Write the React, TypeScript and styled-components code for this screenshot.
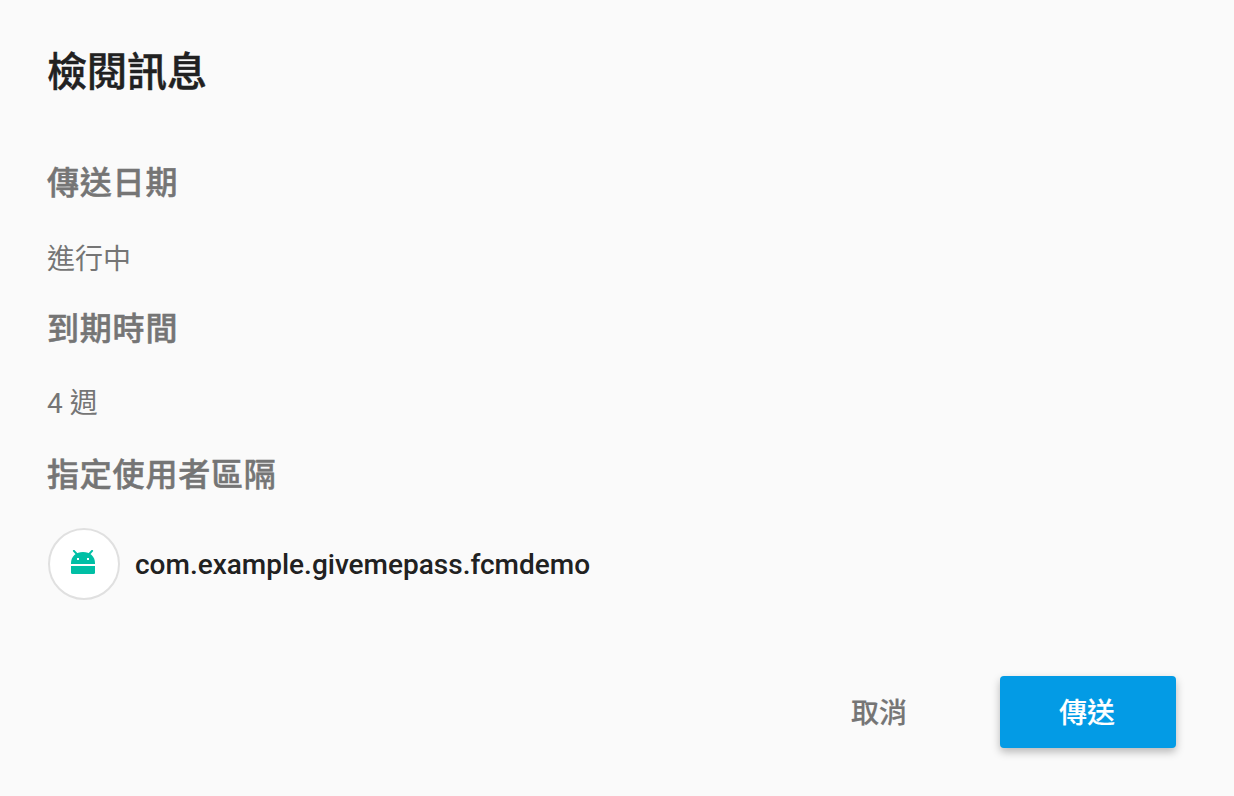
import React from 'react';
import styled, { createGlobalStyle } from 'styled-components';

const GlobalStyle = createGlobalStyle`
  body { margin: 0; background: #fafafa; }
  * { box-sizing: border-box; }
`;

const Dialog = styled.main`
  display: flex;
  flex-direction: column;
  width: 100%;
  height: 796px;
  padding: 45px 58px 48px 47px;
  background: #fafafa;
  color: #757575;
  font-family: Roboto, 'Noto Sans CJK TC', sans-serif;
`;

const Title = styled.h1`
  margin: 0;
  font-size: 40px;
  line-height: 56px;
  font-weight: 500;
  color: #212121;
  -webkit-text-stroke: 0.5px #212121;
`;

const Sections = styled.dl`
  display: flex;
  flex-direction: column;
  margin: 58px 0 0;
`;

const Label = styled.dt`
  font-size: 32px;
  line-height: 48px;
  font-weight: 500;
  letter-spacing: 0.8px;
  -webkit-text-stroke: 0.5px #757575;
`;

const Value = styled.dd<{ $lead: number }>`
  margin: ${p => p.$lead}px 0 ${p => 58 - p.$lead}px;
  font-size: 28px;
  line-height: 40px;
`;

const AppTarget = styled.dd`
  display: flex;
  align-items: center;
  gap: 15px;
  margin: 29px 0 0 1px;
`;

const Avatar = styled.span`
  display: flex;
  align-items: center;
  justify-content: center;
  width: 72px;
  height: 72px;
  padding: 0 2px 4px 0;
  border: 2px solid #e0e0e0;
  border-radius: 50%;
  background: #fff;
`;

const PackageName = styled.span`
  padding-top: 2px;
  font-size: 28px;
  line-height: 40px;
  font-weight: 500;
  color: #212121;
`;

const Actions = styled.footer`
  display: flex;
  justify-content: flex-end;
  gap: 32px;
  margin-top: auto;
`;

const Button = styled.button<{ $primary?: boolean }>`
  width: 176px;
  height: 72px;
  padding: 3px 2px 0 0;
  border: 0;
  border-radius: 4px;
  background: ${p => (p.$primary ? '#039be5' : 'transparent')};
  color: ${p => (p.$primary ? '#fff' : '#757575')};
  box-shadow: ${p => (p.$primary ? '0 4px 8px rgba(0,0,0,.27)' : 'none')};
  font: 500 28px/40px Roboto, 'Noto Sans CJK TC', sans-serif;
  -webkit-text-stroke: 0.15px currentColor;
`;

const AndroidIcon = () => (
  <svg width="24" height="24" viewBox="0 0 24 24" fill="#00bfa5">
    <path d="M0 14v-1C0 6.500 5 2 12 2s12 4.500 12 11v1Z" />
    <path d="M0 16h24v6.500a1.500 1.500 0 0 1-1.500 1.500h-21A1.500 1.500 0 0 1 0 22.500Z" />
    <path d="M2.900.900 6 4.200M21.100.900 18 4.200" stroke="#00bfa5" strokeWidth="2" strokeLinecap="round" />
    <path d="M6 8h2v2H6ZM16 8h2v2h-2Z" fill="#fff" />
  </svg>
);

export default function App() {
  return (
    <>
      <GlobalStyle />
      <Dialog lang="zh-Hant">
        <Title>檢閱訊息</Title>
        <Sections>
          <Label>傳送日期</Label>
          <Value $lead={33}>進行中</Value>
          <Label>到期時間</Label>
          <Value $lead={31}>4 週</Value>
          <Label>指定使用者區隔</Label>
          <AppTarget>
            <Avatar><AndroidIcon /></Avatar>
            <PackageName>com.example.givemepass.fcmdemo</PackageName>
          </AppTarget>
        </Sections>
        <Actions>
          <Button>取消</Button>
          <Button $primary>傳送</Button>
        </Actions>
      </Dialog>
    </>
  );
}
